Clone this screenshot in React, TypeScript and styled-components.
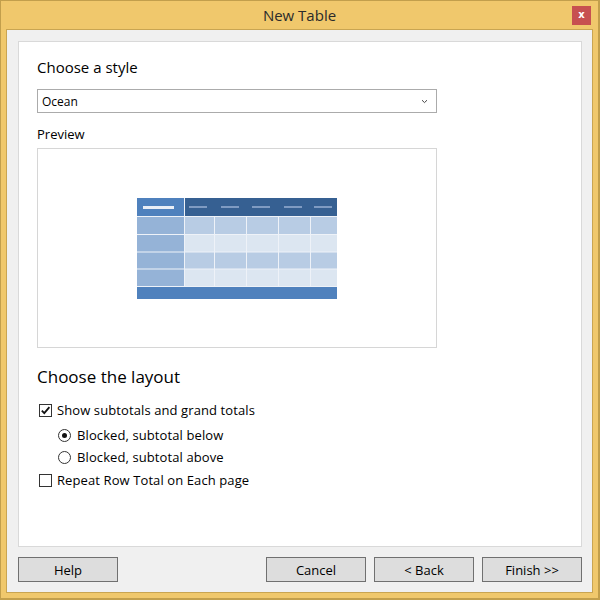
import React from "react";
import styled, { createGlobalStyle } from "styled-components";

const GlobalStyle = createGlobalStyle`
  html, body { margin: 0; padding: 0; background: #ffffff; }
  * { box-sizing: border-box; }
`;

const FONT = `"Open Sans", "Noto Sans", "Liberation Sans", sans-serif`;

const Window = styled.div`
  width: 600px;
  height: 600px;
  background: #f0c86c;
  border: 1px solid #c29f4c;
  border-right-width: 2px;
  border-bottom-width: 2px;
  display: flex;
  flex-direction: column;
  font-family: ${FONT};
  color: #000;
`;

const TitleBar = styled.div`
  height: 28px;
  display: grid;
  grid-template-columns: 1fr auto 1fr;
  align-items: center;
`;

const Title = styled.div`
  grid-column: 2;
  font-size: 15px;
  color: #2b2b2b;
  line-height: 20px;
`;

const CloseButton = styled.div`
  grid-column: 3;
  justify-self: end;
  align-self: start;
  margin-top: 5px;
  margin-right: 7px;
  width: 19px;
  height: 19px;
  background: #c75050;
  color: #fff;
  font-family: "DejaVu Sans", sans-serif;
  font-weight: bold;
  font-size: 10px;
  line-height: 18px;
  text-align: center;
`;

const Client = styled.div`
  flex: 1;
  margin: 0 5px 5px;
  border: 1px solid #c9a552;
  background: #f0f0f0;
  display: flex;
  flex-direction: column;
  gap: 10px;
  padding: 11px 10px 10px 11px;
`;

const Panel = styled.div`
  flex: 1;
  background: #ffffff;
  border: 1px solid #d9d9d9;
  padding: 15px 18px 0 18px;
  display: flex;
  flex-direction: column;
  align-items: flex-start;
`;

const Heading = styled.div<{ $size: number; $mt?: number }>`
  font-size: ${(p) => p.$size}px;
  line-height: 20px;
  margin-top: ${(p) => p.$mt ?? 0}px;
  color: #000;
`;

const Select = styled.div`
  margin-top: 12px;
  width: 400px;
  height: 24px;
  border: 1px solid #ababab;
  background: #fff;
  display: flex;
  align-items: center;
  justify-content: space-between;
  padding: 0 8px 0 4px;
  font-size: 12px;
`;

const Label = styled.div`
  margin-top: 12px;
  font-size: 13px;
  line-height: 18px;
`;

const PreviewBox = styled.div`
  margin-top: 5px;
  width: 400px;
  height: 200px;
  border: 1px solid #d6d6d6;
  background: #fff;
  display: flex;
  align-items: center;
  justify-content: center;
`;

const OptionRow = styled.div<{ $indent?: boolean; $mt: number }>`
  display: flex;
  align-items: center;
  gap: 5px;
  margin-top: ${(p) => p.$mt}px;
  margin-left: ${(p) => (p.$indent ? 21 : 2)}px;
  font-size: 13px;
  letter-spacing: 0.1px;
  line-height: 18px;
`;

const CheckBox = styled.span`
  width: 13px;
  height: 13px;
  border: 1px solid #333;
  background: #fff;
  display: inline-flex;
  align-items: center;
  justify-content: center;
`;

const Radio = styled.span`
  width: 13px;
  height: 13px;
  border: 1px solid #333;
  border-radius: 50%;
  background: #fff;
  display: inline-flex;
  align-items: center;
  justify-content: center;
  margin-right: 1px;
`;

const Dot = styled.span`
  width: 5px;
  height: 5px;
  border-radius: 50%;
  background: #111;
`;

const Footer = styled.div`
  display: flex;
  gap: 8px;
`;

const Button = styled.div<{ $push?: boolean }>`
  width: 100px;
  height: 25px;
  border: 1px solid #707070;
  background: #dddddd;
  font-size: 13px;
  display: flex;
  align-items: center;
  justify-content: center;
  margin-left: ${(p) => (p.$push ? "auto" : "0")};
`;

const bodyCols = [
  [48, 29],
  [78, 31],
  [110, 31],
  [142, 31],
  [174, 26],
];
const rows = [
  [19, 17, "#b8cce4"],
  [37, 16.5, "#dce6f1"],
  [54.5, 16, "#b8cce4"],
  [71.5, 16.5, "#dce6f1"],
] as const;
const dashes = [52, 84, 115, 147, 177];

function TablePreview() {
  return (
    <svg width="200" height="101" viewBox="0 0 200 101">
      <rect x="0" y="0" width="200" height="101" fill="#eef2f8" />
      <rect x="0" y="0" width="47" height="18" fill="#4f81bd" />
      <rect x="48" y="0" width="152" height="18" fill="#366092" />
      <rect x="6" y="8" width="31" height="3" fill="#e9eef6" />
      {dashes.map((d) => (
        <rect key={d} x={d} y="8" width="18" height="2" fill="#7f9bc2" />
      ))}
      {rows.map(([y, h, c]) => (
        <g key={y}>
          <rect x="0" y={y} width="47" height={h} fill="#95b3d7" />
          {bodyCols.map(([x, w]) => (
            <rect key={x} x={x} y={y} width={w} height={h} fill={c} />
          ))}
        </g>
      ))}
      <rect x="0" y="89" width="200" height="12" fill="#4f81bd" />
    </svg>
  );
}

function Chevron() {
  return (
    <svg width="7" height="5" viewBox="0 0 7 5">
      <path d="M1 1.2 L3.5 3.6 L6 1.2" fill="none" stroke="#444" strokeWidth="1" />
    </svg>
  );
}

function Check() {
  return (
    <svg width="11" height="11" viewBox="0 0 11 11">
      <path d="M1.8 5.6 L4.3 8.2 L9.4 2.2" fill="none" stroke="#111" strokeWidth="1.8" />
    </svg>
  );
}

export default function App() {
  return (
    <>
      <GlobalStyle />
      <Window>
        <TitleBar>
          <Title>New Table</Title>
          <CloseButton>x</CloseButton>
        </TitleBar>
        <Client>
          <Panel>
            <Heading $size={15}>Choose a style</Heading>
            <Select>
              <span>Ocean</span>
              <Chevron />
            </Select>
            <Label>Preview</Label>
            <PreviewBox>
              <TablePreview />
            </PreviewBox>
            <Heading $size={17} $mt={19}>Choose the layout</Heading>
            <OptionRow $mt={14}>
              <CheckBox>
                <Check />
              </CheckBox>
              Show subtotals and grand totals
            </OptionRow>
            <OptionRow $indent $mt={7}>
              <Radio>
                <Dot />
              </Radio>
              Blocked, subtotal below
            </OptionRow>
            <OptionRow $indent $mt={4}>
              <Radio />
              Blocked, subtotal above
            </OptionRow>
            <OptionRow $mt={5}>
              <CheckBox />
              Repeat Row Total on Each page
            </OptionRow>
          </Panel>
          <Footer>
            <Button>Help</Button>
            <Button $push>Cancel</Button>
            <Button>&lt; Back</Button>
            <Button>Finish &gt;&gt;</Button>
          </Footer>
        </Client>
      </Window>
    </>
  );
}
